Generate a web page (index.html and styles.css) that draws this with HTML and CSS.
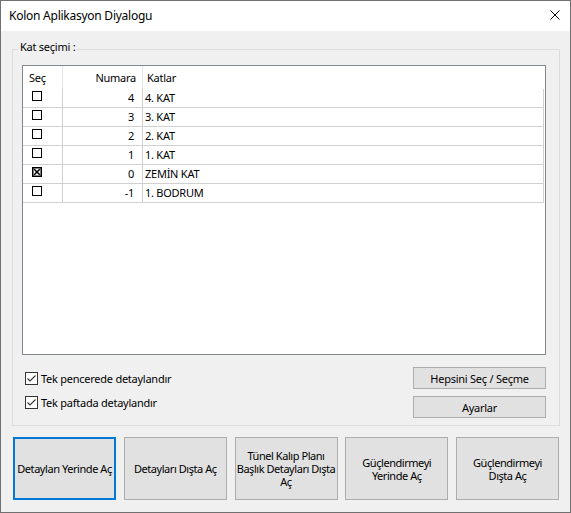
FILE: index.html
```html
<!DOCTYPE html>
<html lang="tr">
<head>
  <meta charset="UTF-8">
  <title>Kolon Aplikasyon Diyalogu</title>
  <link rel="stylesheet" href="styles.css">
</head>
<body>

  <div class="window">
    <div class="titlebar">
      <span class="title">Kolon Aplikasyon Diyalogu</span>
      <svg class="close" width="10" height="10" viewBox="0 0 10 10">
        <path d="M0.5 0.5 L9.5 9.5 M9.5 0.5 L0.5 9.5" stroke="#000" stroke-width="1" fill="none"/>
      </svg>
    </div>

    <div class="content">
      <fieldset class="group">
        <legend>Kat seçimi :</legend>

        <div class="list">
          <div class="grid">
            <div class="head c-sec">Seç</div>
            <div class="head c-num">Numara</div>
            <div class="head c-kat">Katlar</div>

            <div class="cell c-sec"><span class="tick"></span></div>
            <div class="cell c-num">4</div>
            <div class="cell c-kat">4. KAT</div>

            <div class="cell c-sec"><span class="tick"></span></div>
            <div class="cell c-num">3</div>
            <div class="cell c-kat">3. KAT</div>

            <div class="cell c-sec"><span class="tick"></span></div>
            <div class="cell c-num">2</div>
            <div class="cell c-kat">2. KAT</div>

            <div class="cell c-sec"><span class="tick"></span></div>
            <div class="cell c-num">1</div>
            <div class="cell c-kat">1. KAT</div>

            <div class="cell c-sec">
              <svg class="tick-on" width="10" height="10" viewBox="0 0 10 10">
                <rect x="0.75" y="0.75" width="8.5" height="8.5" fill="#fff" stroke="#000" stroke-width="1.5"/>
                <path d="M2.2 2.2 L7.8 7.8 M7.8 2.2 L2.2 7.8" stroke="#000" stroke-width="1.6"/>
              </svg>
            </div>
            <div class="cell c-num">0</div>
            <div class="cell c-kat">ZEMİN KAT</div>

            <div class="cell c-sec"><span class="tick"></span></div>
            <div class="cell c-num">-1</div>
            <div class="cell c-kat">1. BODRUM</div>
          </div>
        </div>

        <div class="options">
          <div class="checks">
            <label class="check">
              <svg width="13" height="13" viewBox="0 0 13 13">
                <rect x="0.5" y="0.5" width="12" height="12" fill="#fff" stroke="#333"/>
                <polyline points="2.5,6.5 5,9 10.5,3.5" fill="none" stroke="#333" stroke-width="1.1"/>
              </svg>
              <span>Tek pencerede detaylandır</span>
            </label>
            <label class="check">
              <svg width="13" height="13" viewBox="0 0 13 13">
                <rect x="0.5" y="0.5" width="12" height="12" fill="#fff" stroke="#333"/>
                <polyline points="2.5,6.5 5,9 10.5,3.5" fill="none" stroke="#333" stroke-width="1.1"/>
              </svg>
              <span>Tek paftada detaylandır</span>
            </label>
          </div>
          <div class="side-buttons">
            <button class="btn">Hepsini Seç / Seçme</button>
            <button class="btn">Ayarlar</button>
          </div>
        </div>
      </fieldset>

      <div class="actions">
        <button class="action default">Detayları Yerinde Aç</button>
        <button class="action">Detayları Dışta Aç</button>
        <button class="action">Tünel Kalıp Planı Başlık Detayları Dışta Aç</button>
        <button class="action">Güçlendirmeyi Yerinde Aç</button>
        <button class="action narrow">Güçlendirmeyi Dışta Aç</button>
      </div>
    </div>
  </div>

</body>
</html>
```

FILE: styles.css
```css
* {
  box-sizing: border-box;
}

body {
  margin: 0;
  font-family: "Noto Sans", sans-serif;
  font-size: 11px;
  letter-spacing: -0.25px;
  color: #000;
}

.window {
  width: 571px;
  height: 513px;
  border: 1px solid #707070;
  background: #f0f0f0;
}

.titlebar {
  height: 30px;
  background: #fff;
  display: flex;
  align-items: center;
  justify-content: space-between;
  padding: 0 10px 2px 8px;
}

.title {
  font-size: 12px;
}

.content {
  padding: 0 10px 0 11px;
}

.group {
  margin: 10px 0 0;
  padding: 8px 13px 7px 9px;
  border: 1px solid #dcdcdc;
  min-width: 0;
}

.group legend {
  margin-left: -4px;
  padding: 0 2px 4px;
  line-height: 12px;
}

.list {
  height: 290px;
  border: 1px solid #828790;
  background: #fff;
}

.grid {
  display: grid;
  grid-template-columns: 40px 80px 401px;
}

.head {
  height: 23px;
  line-height: 23px;
  border-right: 1px solid #e5e5e5;
}

.cell {
  height: 19px;
  line-height: 18px;
  border-right: 1px solid #d0d0d0;
  border-bottom: 1px solid #d0d0d0;
}

.head.c-sec { padding-left: 6px; }
.head.c-num { padding-right: 6px; text-align: right; }
.head.c-kat { padding-left: 4px; border-right: none; }

.cell.c-sec { padding: 2px 0 0 9px; line-height: 0; }
.cell.c-num { padding-right: 8px; text-align: right; }
.cell.c-kat { padding-left: 2px; }

.tick {
  display: inline-block;
  width: 10px;
  height: 10px;
  border: 1px solid #000;
  background: #fff;
}

.options {
  display: flex;
  justify-content: space-between;
  margin-top: 12px;
}

.checks {
  margin-top: -1px;
  padding-left: 3px;
}

.check {
  display: flex;
  align-items: center;
  gap: 3px;
  height: 24px;
}

.check svg {
  display: block;
}

.side-buttons {
  display: flex;
  flex-direction: column;
  gap: 7px;
}

button {
  font-family: inherit;
  font-size: 11px;
  letter-spacing: -0.25px;
  color: #000;
  background: #e1e1e1;
  border: 1px solid #adadad;
  padding: 0 1px;
  margin: 0;
}

.btn {
  width: 133px;
  height: 22px;
}

.actions {
  display: flex;
  justify-content: space-between;
  margin: 11px 1px 0;
}

.action {
  width: 103px;
  height: 63px;
  line-height: 13px;
  padding: 0;
  letter-spacing: -0.45px;
}

.action.narrow {
  padding: 0 6px;
}

.action.default {
  border: 2px solid #0078d7;
}
```
